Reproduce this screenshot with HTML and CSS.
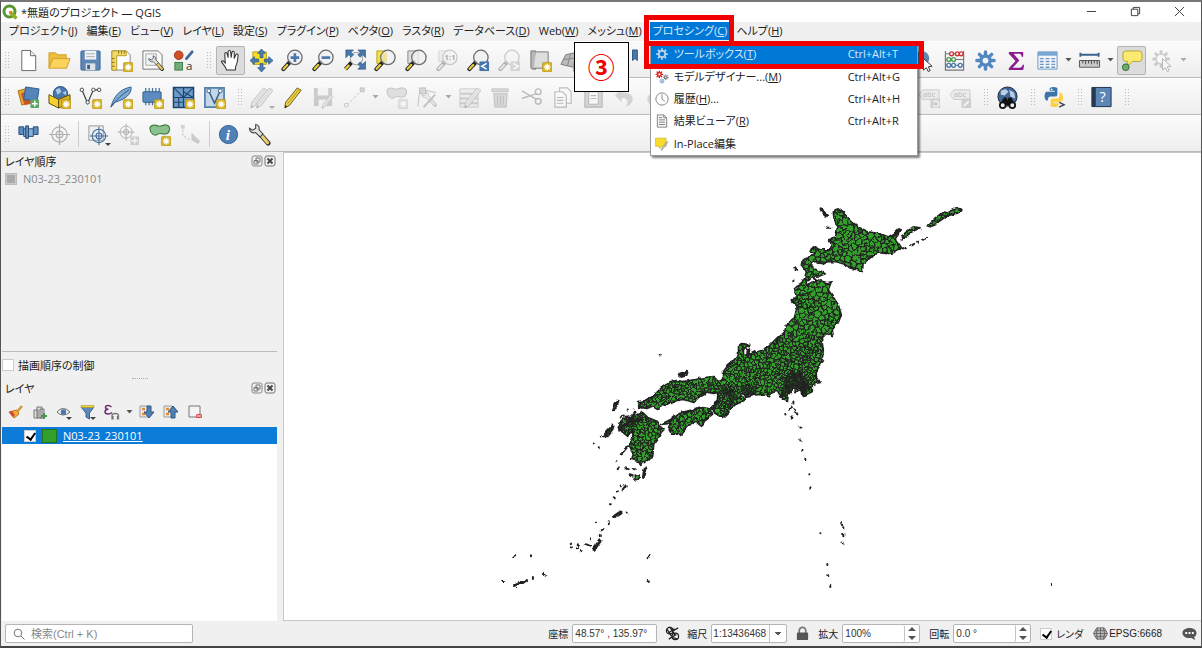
FILE: index.html
```html
<!DOCTYPE html>
<html lang="ja">
<head>
    <meta charset="UTF-8">
    <meta name="viewport" content="width=device-width, initial-scale=1.0">
    <title>無題のプロジェクト — QGIS</title>
    <link rel="stylesheet" href="styles.css">
</head>
<body>

<!-- shared icon parts -->
<svg class="defs" width="0" height="0">
    <symbol id="star" viewBox="0 0 24 24">
        <rect x="14" y="14" width="10" height="10" rx="1.5" fill="#d8b526" stroke="#a88a16" stroke-width=".6"/>
        <path d="M19 15.500V22.500M15.500 19H22.500M16.600 16.600l4.800 4.800M21.400 16.600l-4.800 4.800" stroke="#fff" stroke-width="1.300"/>
    </symbol>
    <symbol id="lens" viewBox="0 0 24 24">
        <path d="M9 14L2.500 21" stroke="#222" stroke-width="4.200" stroke-linecap="round"/>
        <path d="M6.500 16.700L2.800 20.700" stroke="#e6cc3c" stroke-width="2.400" stroke-linecap="round"/>
        <circle cx="14.500" cy="8.800" r="7.500" fill="#eef0f2" fill-opacity=".8" stroke="#6a6a6a" stroke-width="1.300"/>
    </symbol>
    <symbol id="gear" viewBox="0 0 24 24">
        <g stroke="currentColor" stroke-width="3.600" stroke-linecap="round">
            <path d="M12 3V21M3 12H21M5.600 5.600L18.400 18.400M18.400 5.600L5.600 18.400"/>
        </g>
        <circle cx="12" cy="12" r="6.500" fill="currentColor"/>
        <circle cx="12" cy="12" r="3" fill="#f2f2f2"/>
    </symbol>
    <symbol id="pencil" viewBox="0 0 24 24">
        <path d="M17 2l4 2.500L9 20l-5 3 .8-6z" fill="#e9cf45" stroke="#6b5c1c" stroke-width="1"/>
        <path d="M19 3.200L7 18.500" stroke="#b89a20" stroke-width="1"/>
        <path d="M4 23l.6-3 2 1.400z" fill="#222"/>
    </symbol>
    <symbol id="wrench" viewBox="0 0 24 24">
        <path d="M14 13l7 8" stroke="#333" stroke-width="5" stroke-linecap="round"/>
        <path d="M14.500 13.500l6 7" stroke="#ead06a" stroke-width="3.200" stroke-linecap="round"/>
        <path d="M1.500 5.500l3.500 2 3-2V1.500c3 .5 4 3 3.500 5.500l4 4.500-3 3-4.500-4.500C4.500 11 1.500 9 1.500 5.500z" fill="#e3e3e3" stroke="#444" stroke-width="1.100"/>
    </symbol>
    <symbol id="blob" viewBox="0 0 24 24">
        <path d="M2 6c0-4 5-4.500 8-3s5-1 8-1 5 2 4.500 5-2 5-6 4.500-4-1.500-7 .5-7-1-7.500-6z" fill="#8cc08e" stroke="#3f7f45" stroke-width="1.200"/>
    </symbol>
    <symbol id="label" viewBox="0 0 24 24">
        <path d="M1 9l4-5h17v10H5z" fill="#e2d8b0" stroke="#777"/>
    </symbol>
    <symbol id="cursor" viewBox="0 0 24 24">
        <path d="M12 10l9 8-4 .5 2 4-2 1-2-4-3 2.500z" fill="#fff" stroke="#333"/>
    </symbol>
    <symbol id="float" viewBox="0 0 12 12">
        <rect x="1" y="1" width="10" height="10" rx="2" fill="none" stroke="#888"/>
        <path d="M5 3h4v4H5zM3 5.500h4V9H3z" fill="#eee" stroke="#777"/>
    </symbol>
    <symbol id="close" viewBox="0 0 12 12">
        <rect x="1" y="1" width="10" height="10" rx="2" fill="none" stroke="#777"/>
        <path d="M3.500 3.500l5 5M8.500 3.500l-5 5" stroke="#444" stroke-width="1.800"/>
    </symbol>
    <symbol id="target" viewBox="0 0 24 24">
        <g fill="none" stroke="currentColor" stroke-width="1.300"><circle cx="12" cy="12" r="8"/><circle cx="12" cy="12" r="3.500"/><path d="M12 1v22M1 12h22"/></g>
    </symbol>
</svg>

<div class="window">
    <header class="titlebar">
        <svg class="logo" viewBox="0 0 16 16">
            <circle cx="7.500" cy="7.500" r="5.500" fill="none" stroke="#589632" stroke-width="3"/>
            <path d="M8 8l6.500 6.500" stroke="#93b023" stroke-width="3.400"/>
            <path d="M7 7l3.500.5-3 3z" fill="#ee7913"/>
        </svg>
        <h1>*無題のプロジェクト — QGIS</h1>
        <div class="window-controls">
            <button aria-label="最小化"><svg viewBox="0 0 12 12"><path d="M1 6h10"/></svg></button>
            <button aria-label="元に戻す"><svg viewBox="0 0 12 12"><path d="M1.500 3.500h7v7h-7zM3.500 3.500v-2h7v7h-2"/></svg></button>
            <button aria-label="閉じる"><svg viewBox="0 0 12 12"><path d="M1 1l10 10M11 1L1 11"/></svg></button>
        </div>
    </header>

    <nav class="menubar">
        <button>プロジェクト(<u>J</u>)</button>
        <button>編集(<u>E</u>)</button>
        <button>ビュー(<u>V</u>)</button>
        <button>レイヤ(<u>L</u>)</button>
        <button>設定(<u>S</u>)</button>
        <button>プラグイン(<u>P</u>)</button>
        <button>ベクタ(<u>O</u>)</button>
        <button>ラスタ(<u>R</u>)</button>
        <button>データベース(<u>D</u>)</button>
        <button>Web(<u>W</u>)</button>
        <button>メッシュ(<u>M</u>)</button>
        <div class="menu-open">
            <button class="active">プロセシング(<u>C</u>)</button>
            <div class="menu">
                <button class="menu-row selected">
                    <svg viewBox="0 0 24 24" color="#b8d4ee"><g stroke="currentColor" stroke-width="3"><path d="M12 2V22M2 12H22M5 5L19 19M19 5L5 19"/></g><circle cx="12" cy="12" r="5.500" fill="#0078d7" stroke="currentColor" stroke-width="3"/></svg>
                    <span>ツールボックス(<u>T</u>)</span><kbd>Ctrl+Alt+T</kbd>
                </button>
                <button class="menu-row">
                    <svg viewBox="0 0 24 24"><use href="#gear" width="15" height="15" color="#d22"/><use href="#gear" x="13" y="7" width="11" height="11" color="#777"/><use href="#gear" x="7" y="14" width="10" height="10" color="#79a3cf"/></svg>
                    <span>モデルデザイナー...(<u>M</u>)</span><kbd>Ctrl+Alt+G</kbd>
                </button>
                <button class="menu-row">
                    <svg viewBox="0 0 24 24" fill="none" stroke="#777" stroke-width="1.500"><circle cx="12" cy="12" r="10.500"/><path d="M12 4v8l5 4"/></svg>
                    <span>履歴(<u>H</u>)...</span><kbd>Ctrl+Alt+H</kbd>
                </button>
                <button class="menu-row">
                    <svg viewBox="0 0 24 24" fill="#f6f6f6" stroke="#777" stroke-width="1.500"><path d="M4 1.500h11l5 5v16H4zM15 1.500v5h5M7 10h10M7 14h10M7 18h10M7 6h5"/></svg>
                    <span>結果ビューア(<u>R</u>)</span><kbd>Ctrl+Alt+R</kbd>
                </button>
                <button class="menu-row">
                    <svg viewBox="0 0 24 24"><path d="M1 2h18v14h-7l-4 4v-4H1z" fill="#f7dc2c" stroke="#c3a812"/><path d="M22 9l-8 11-3 3 1-4 8-11z" fill="#ddd" stroke="#777"/></svg>
                    <span>In-Place編集</span>
                </button>
            </div>
            <span class="frame frame-menu"></span>
            <span class="frame frame-row"></span>
            <span class="callout">③</span>
        </div>
        <button>ヘルプ(<u>H</u>)</button>
    </nav>

    <div class="toolbar">
        <i class="grip"></i>
        <button aria-label="新規"><svg viewBox="0 0 24 24"><path d="M5 1.500h9l5.500 5.500v15.500H5z" fill="#fff" stroke="#666"/><path d="M14 1.500V7h5.500" fill="#eee" stroke="#666"/></svg></button>
        <button aria-label="開く"><svg viewBox="0 0 24 24"><path d="M1 20V4h7l2 2h9v4" fill="#eebe3c" stroke="#cf9e2a"/><path d="M1 20l4-10h18l-3.500 10z" fill="#fcd35c" stroke="#cf9e2a"/></svg></button>
        <button aria-label="保存"><svg viewBox="0 0 24 24"><rect x="2" y="2" width="20" height="20" rx="1" fill="#5c86b4" stroke="#3d6594"/><path d="M6 2h12v9H6z" fill="#f0f3f6"/><path d="M7.500 5h9M7.500 8h9" stroke="#aaa"/><path d="M7 15h10v7H7z" fill="#dde2e8"/><path d="M8.500 16.500h3V21h-3z" fill="#3a5f8a"/></svg></button>
        <button aria-label="新規レイアウト"><svg viewBox="0 0 24 24"><path d="M2 2h15l4 4v16H2z" fill="#fff" stroke="#888"/><path d="M2 2h15v5H7v15H2z" fill="#f3d968" stroke="#b89b25"/><path d="M9 2v3M12 2v3M15 2v3M2 10h3M2 14h3M2 18h3" stroke="#8d7518"/><use href="#star"/></svg></button>
        <button aria-label="レイアウトマネージャ"><svg viewBox="0 0 24 24"><path d="M2 2h16l4 4v15H2z" fill="#fafafa" stroke="#777"/><path d="M5 5h11v12H5z" fill="#eef3f8" stroke="#aaa"/><g transform="translate(7 6) scale(.72)"><use href="#wrench" width="24" height="24"/></g></svg></button>
        <button aria-label="スタイルマネージャ"><svg viewBox="0 0 24 24"><circle cx="7" cy="6.500" r="4.500" fill="#cf5026" stroke="#9c3614"/><path d="M15 10l6-7" stroke="#44699a" stroke-width="3" stroke-linecap="round"/><rect x="3" y="14" width="8" height="8" fill="#70ab7a" stroke="#417b4c"/><text x="14.500" y="22" font-size="12" fill="#333">a</text></svg></button>
        <i class="grip"></i>
        <button class="checked" aria-label="地図移動"><svg viewBox="0 0 24 24"><path d="M8 22c-1-4-4-6-5.500-9 1-1.500 2.500-.5 4 1.500L6 5c.3-1.800 2.200-1.800 2.500 0L9.500 9V3c.3-2 2.500-2 2.700 0l.5 6 .8-5.500c.5-1.700 2.500-1.400 2.500.5L15.800 10l1.700-4c.8-1.500 2.600-.8 2.400.8-.5 4-.5 8-2.400 11l-.5 4.200z" fill="#fff" stroke="#333" stroke-width="1.100"/></svg></button>
        <button aria-label="選択部分へパン"><svg viewBox="0 0 24 24"><path d="M3 3h14v13H3z" fill="#f8df20" stroke="#b5a01c"/><path d="M12 0l4 4.500h-2.500V9h-3V4.500H8zM12 24l-4-4.500h2.500V15h3v4.500H16zM0 12l4.500-4v2.500H9v3H4.500V16zM24 12l-4.500 4v-2.500H15v-3h4.500V8z" fill="#4c7cb0" stroke="#2f5a8b" stroke-width=".8"/></svg></button>
        <button aria-label="拡大"><svg viewBox="0 0 24 24"><use href="#lens"/><path d="M14.500 4.500v9M10 9h9" stroke="#4a78ac" stroke-width="2.800"/></svg></button>
        <button aria-label="縮小"><svg viewBox="0 0 24 24"><use href="#lens"/><path d="M10 9h9" stroke="#4a78ac" stroke-width="2.800"/></svg></button>
        <button aria-label="全域表示"><svg viewBox="0 0 24 24"><path d="M9 14L2.500 21" stroke="#222" stroke-width="4"/><path d="M6.500 16.700l-4 4.300" stroke="#e6cc3c" stroke-width="2.400"/><circle cx="14" cy="10" r="6.500" fill="#eef0f2" stroke="#999"/><g fill="#4878ac" stroke="#2d5788" stroke-width=".7"><path d="M3 1h8L8.500 3.500l2.500 2.500-2.500 2.500L6 6 3 9zM23.500 1h-8L18 3.500 15.500 6 18 8.500 20.500 6l3 3zM23.500 21h-8l2.500-2.500-2.500-2.500 2.500-2.500 2.500 2.500 3-3z"/></g></svg></button>
        <button aria-label="選択範囲にズーム"><svg viewBox="0 0 24 24"><path d="M3 2h10v13H3z" fill="#f5df42" stroke="#b9a324"/><use href="#lens"/><path d="M9 5h4v8H9z" fill="#f1e28a"/></svg></button>
        <button aria-label="レイヤにズーム"><svg viewBox="0 0 24 24"><path d="M3 2h11v13H3z" fill="#ddd" stroke="#888"/><use href="#lens"/></svg></button>
        <button aria-label="等倍" disabled><svg viewBox="0 0 24 24"><path d="M3 2h11v11H3z" fill="#ddd" stroke="#888"/><use href="#lens"/><text x="9" y="12" font-size="8" font-weight="700">1:1</text></svg></button>
        <button aria-label="前の表示"><svg viewBox="0 0 24 24"><use href="#lens"/><rect x="13" y="13" width="10" height="10" fill="#4474aa"/><path d="M20.500 15l-5 3 5 3" fill="none" stroke="#fff" stroke-width="1.700"/></svg></button>
        <button aria-label="次の表示" disabled><svg viewBox="0 0 24 24"><use href="#lens"/><rect x="13" y="13" width="10" height="10" fill="#999"/><path d="M16 15l5 3-5 3" fill="none" stroke="#fff" stroke-width="1.700"/></svg></button>
        <button aria-label="新規地図ビュー"><svg viewBox="0 0 24 24"><path d="M2 2h5v19H4a2 2 0 0 1-2-2z" fill="#b8b8b8" stroke="#777"/><path d="M7 3h13v17H5" fill="#dedede" stroke="#777"/><use href="#star"/></svg></button>
        <button aria-label="新規3Dビュー"><svg viewBox="0 0 24 24"><path d="M1 16L6 6l9-2h7v12l-8 3z" fill="#bbb" stroke="#777"/><path d="M4 11l16-2M11 5l-3 12" stroke="#888"/><use href="#star"/></svg></button>
        <button aria-label="ブックマーク作成"><svg viewBox="0 0 24 24"><path d="M8 2h6v9l-3-2-3 2z" fill="#5c86b4"/></svg></button>
        <button aria-label="ブックマーク"><svg viewBox="0 0 24 24"><path d="M11 1h5v11l-2.500-2L11 12z" fill="#4a78ac" stroke="#2d5788"/></svg></button>
        <i class="toolbar-space"></i>
        <button aria-label="地物情報"><svg viewBox="0 0 24 24"><circle cx="10" cy="10" r="8" fill="#5c86b4"/><use href="#cursor"/></svg></button>
        <button aria-label="計算機"><svg viewBox="0 0 24 24"><path d="M2.500 2v20M21.500 2v20M2 22h20M3 5h18M3 11h18M3 17h18" stroke="#777" stroke-width="1.200"/><g fill="#fff" stroke-width="1.500"><g stroke="#c33"><circle cx="9" cy="5" r="2"/><circle cx="15" cy="5" r="2"/><circle cx="19" cy="5" r="2"/></g><g stroke="#4b9c4e"><circle cx="6" cy="11" r="2"/><circle cx="11" cy="11" r="2"/></g><g stroke="#4a78ac"><circle cx="6" cy="17" r="2"/><circle cx="11" cy="17" r="2"/><circle cx="18" cy="17" r="2"/></g></g></svg></button>
        <button aria-label="ツールボックス"><svg viewBox="0 0 24 24" color="#5387c0"><use href="#gear"/></svg></button>
        <button aria-label="統計"><svg viewBox="0 0 24 24"><path d="M4 3h15v5h-1.500C17 5.500 16 5 14 5H9l6 7-7 7.500h7c2 0 3-1 3.500-3H20L19 22H4v-2l7-7.500L4 5z" fill="#8b1a8b"/></svg></button>
        <button aria-label="属性テーブル"><svg viewBox="0 0 24 24"><path d="M2 3h20v18H2z" fill="#f3f6fa" stroke="#6d96c4"/><path d="M2 3h20v4H2z" fill="#7ba7d7"/><path d="M4 10h4M10 10h4M16 10h4M4 13h4M10 13h4M16 13h4M4 16h4M10 16h4M16 16h4M4 19h4M10 19h4M16 19h4" stroke="#6d96c4" stroke-width="1.400"/></svg></button>
        <i class="arrow"></i>
        <button aria-label="計測"><svg viewBox="0 0 24 24"><path d="M2 6h20M2.500 4v4M21.500 4v4" stroke="#3c638f" stroke-width="2"/><path d="M1.500 12h21v7h-21z" fill="#ccc" stroke="#555"/><path d="M5 12v3M8 12v4M11 12v3M14 12v4M17 12v3M20 12v4" stroke="#444"/></svg></button>
        <i class="arrow"></i>
        <button class="checked" aria-label="マップチップ"><svg viewBox="0 0 24 24"><path d="M6 2h14q3 0 3 3v5q0 3-3 3h-7l-5 5v-5H6q-3 0-3-3V5q0-3 3-3z" fill="#faea70" stroke="#b7a52b"/><circle cx="6" cy="19" r="3.500" fill="#69ab70" stroke="#35683c"/></svg></button>
        <button aria-label="アクション" disabled><svg viewBox="0 0 24 24" color="#777"><use href="#gear" width="21" height="21"/><circle cx="10.500" cy="10.500" r="5" fill="#fff" stroke="#666"/><use href="#cursor"/></svg></button>
        <i class="arrow faded"></i>
    </div>

    <div class="toolbar">
        <i class="grip"></i>
        <button aria-label="データソースマネージャ"><svg viewBox="0 0 24 24"><path d="M1 5l11-3 3 14-10 4z" fill="#e7a72c" stroke="#aa7511"/><path d="M4 8l9-4 4 14-9 2z" fill="#cc542d"/><path d="M9 1l14 2-2 13-14-2z" fill="#5484b8" stroke="#305c90"/><rect x="14" y="14" width="9" height="9" rx="1" fill="#5ea464"/><path d="M18.500 15.500v6M15.500 18.500h6" stroke="#fff" stroke-width="1.500"/></svg></button>
        <button aria-label="GeoPackage"><svg viewBox="0 0 24 24"><circle cx="13" cy="8" r="7.500" fill="#4777ad" stroke="#2c517e"/><path d="M8 4l4-2 2 4-4 3zM15 7l4-2v5z" fill="#aecae6"/><path d="M1 9l10 5v9L1 18z" fill="#f5cf2a" stroke="#5d4c08"/><path d="M11 14l12-5v9l-12 5z" fill="#e0b51b" stroke="#5d4c08"/><use href="#star"/></svg></button>
        <button aria-label="新規シェープファイル"><svg viewBox="0 0 24 24"><path d="M3 4l6 14 6-14h6" fill="none" stroke="#444" stroke-width="1.300"/><g fill="#fff" stroke="#444"><circle cx="3" cy="4" r="1.800"/><circle cx="15" cy="4" r="1.800"/><circle cx="21" cy="4" r="1.800"/><circle cx="9" cy="17" r="1.800"/></g><use href="#star"/></svg></button>
        <button aria-label="新規SpatiaLite"><svg viewBox="0 0 24 24"><path d="M1 22C4 10 11 3 22 1c1 7-6 13-17 16z" fill="#7da9d3" stroke="#315d8b"/><path d="M1 22C7 14 13 8 20 4" fill="none" stroke="#315d8b"/><use href="#star"/></svg></button>
        <button aria-label="一時レイヤ"><svg viewBox="0 0 24 24"><path d="M5 2v18M8.500 2v18M12 2v18M15.500 2v18M19 2v18" stroke="#44709f" stroke-width="1.300"/><rect x="2" y="6" width="19" height="11" rx="1" fill="#5c8cbf" stroke="#315d8b"/><use href="#star"/></svg></button>
        <button aria-label="新規メッシュ"><svg viewBox="0 0 24 24"><path d="M1.500 1.500h21v21h-21z" fill="#6d9bcb" stroke="#1e446d" stroke-width="1.500"/><path d="M1.500 12h21M12 1.500v21M1.500 1.500L12 12 22.500 1.500M12 6l10 6M2 17h10M7 12v10" stroke="#1e446d" stroke-width="1.200" fill="none"/><use href="#star"/></svg></button>
        <button aria-label="仮想レイヤ"><svg viewBox="0 0 24 24"><path d="M2 2h20v20H2z" fill="#c3d6ea" stroke="#5580ad" stroke-width="1.800"/><path d="M6 5l6 13 6-13" fill="none" stroke="#2f5a86" stroke-width="1.500"/><circle cx="6" cy="5" r="2" fill="#fff" stroke="#2f5a86"/><circle cx="18" cy="5" r="2" fill="#fff" stroke="#2f5a86"/><use href="#star"/></svg></button>
        <i class="grip"></i>
        <button class="has-arrow faded" aria-label="現在の編集" disabled><svg viewBox="0 0 24 24"><g transform="translate(-3 0)"><use href="#pencil" width="24" height="24"/></g><use href="#pencil" x="3" width="24" height="24"/></svg></button>
        <button aria-label="編集モード"><svg viewBox="0 0 24 24"><use href="#pencil"/></svg></button>
        <button aria-label="編集を保存" disabled><svg viewBox="0 0 24 24"><rect x="2" y="2" width="19" height="19" fill="#777"/><path d="M6 2h11v8H6zM7 14h8v7H7z" fill="#eee"/><use href="#pencil" x="8" y="8" width="16" height="16"/></svg></button>
        <button aria-label="線を追加" disabled><svg viewBox="0 0 24 24"><path d="M4 20L20 4" stroke="#555" stroke-dasharray="3 2"/><circle cx="3.500" cy="20" r="2" fill="#fff" stroke="#555"/><rect x="18" y="2" width="4" height="4" fill="#999" stroke="#555"/></svg></button>
        <i class="arrow faded"></i>
        <button aria-label="ポリゴン追加" disabled><svg viewBox="0 0 24 24"><use href="#blob"/><use href="#star"/></svg></button>
        <button aria-label="頂点ツール" disabled><svg viewBox="0 0 24 24"><path d="M4 3L2 21M4 3l17 4" stroke="#555"/><rect x="4" y="2" width="6" height="6" fill="#999" stroke="#555"/><g transform="translate(5 5) scale(.7)"><use href="#wrench" width="24" height="24"/></g><path d="M8 22L20 9" stroke="#555" stroke-width="2"/></svg></button>
        <i class="arrow faded"></i>
        <button aria-label="属性変更" disabled><svg viewBox="0 0 24 24"><path d="M2 3h19v19H2z" fill="#e6dfa9" stroke="#777"/><path d="M2 8h19M2 13h19M2 18h19" stroke="#777" stroke-width="2"/><use href="#pencil" x="3"/></svg></button>
        <button aria-label="削除" disabled><svg viewBox="0 0 24 24"><path d="M3 3h17v3H3zM5 8h14l-1 14H6z" fill="#d39292" stroke="#844"/><path d="M9 10v10M12 10v10M15 10v10" stroke="#844"/></svg></button>
        <button aria-label="切り取り" disabled><svg viewBox="0 0 24 24" fill="none" stroke="#444" stroke-width="1.500"><path d="M2 5l15 9M2 13l15-5"/><circle cx="19" cy="6" r="3"/><circle cx="19" cy="16" r="3"/></svg></button>
        <button aria-label="コピー" disabled><svg viewBox="0 0 24 24" fill="#fff" stroke="#444" stroke-width="1.200"><path d="M9 2h8l4 4v12H9z"/><path d="M4 6h8l4 4v12H4zM6 12h7M6 15h7M6 18h7"/></svg></button>
        <button aria-label="貼り付け" disabled><svg viewBox="0 0 24 24" fill="#fff" stroke="#444" stroke-width="1.200"><path d="M3 3h18v19H3z" fill="#999"/><path d="M7 6h10v13H7zM9 10h6M9 13h6"/></svg></button>
        <button aria-label="元に戻す操作" disabled><svg viewBox="0 0 24 24"><path d="M2 10l7-7v4c9-1 13 4 11 9-1 3-4 5-7 6 4-6 2-10-4-9v4z" fill="#b78a6a"/></svg></button>
        <button aria-label="やり直し" disabled><svg viewBox="0 0 24 24"><path d="M22 10l-7-7v4C6 6 2 11 4 16c1 3 4 5 7 6-4-6-2-10 4-9v4z" fill="#999"/></svg></button>
        <i class="toolbar-space wide"></i>
        <button aria-label="ラベル回転" disabled><svg viewBox="0 0 24 24"><use href="#label"/><text x="5" y="12" font-size="8" fill="#333">abc</text><rect x="13" y="13" width="10" height="10" rx="1" fill="#888"/><path d="M16 17a3 3 0 1 1 0 3" fill="none" stroke="#fff" stroke-width="1.500"/></svg></button>
        <button aria-label="ラベル編集" disabled><svg viewBox="0 0 24 24"><use href="#label"/><text x="5" y="12" font-size="8" fill="#333">abc</text><rect x="13" y="13" width="10" height="10" rx="1" fill="#888"/><path d="M15.500 21l5-5" stroke="#fff" stroke-width="2"/></svg></button>
        <i class="grip"></i>
        <button aria-label="メタ検索"><svg viewBox="0 0 24 24"><circle cx="12" cy="11" r="10" fill="#3f6695" stroke="#1c2c40"/><path d="M5 5l5-2 3 3-4 4-4-1zM14 4l5 3 1 6-5-2zM7 12l4 2-1 4z" fill="#b9cfe4"/><path d="M8 12h3l1 3 1-3h3l4 8H4z" fill="#111"/><g fill="#eee" stroke="#111" stroke-width="1.800"><circle cx="7" cy="20" r="3"/><circle cx="17" cy="20" r="3"/></g></svg></button>
        <i class="grip"></i>
        <button aria-label="Python"><svg viewBox="0 0 24 24"><path d="M7 2q4-2 8 0v7q0 2-2 2H8q-3 0-3 4H3q-3-4 0-9h9V5H7z" fill="#3e75a8"/><path d="M17 7h2q4 5 0 10h-8v1h5v3q-4 2-8 0v-6q0-2 2-2h5q2 0 2-3z" fill="#fdd142"/><circle cx="9" cy="3.500" r=".9" fill="#fff"/><path d="M17 17l5 2.500-5 2.500" fill="none" stroke="#444" stroke-width="1.500"/></svg></button>
        <i class="grip"></i>
        <button aria-label="ヘルプ"><svg viewBox="0 0 24 24"><path d="M2 1.500h20v20H2z" fill="#5b86b6" stroke="#1e3048"/><path d="M2 1.500h4v20H2z" fill="#25384f"/><text x="10" y="17" font-size="15" fill="#fff">?</text></svg></button>
        <i class="grip"></i>
    </div>

    <div class="toolbar">
        <i class="grip"></i>
        <button aria-label="GPS"><svg viewBox="0 0 24 24"><path d="M2 4h5v8H2zM17 4h5v8h-5z" fill="#5c8cbf" stroke="#284d78"/><path d="M7 6h10v8H7z" fill="#89aed4" stroke="#284d78"/><path d="M9 3h3v13H9z" fill="#5c8cbf" stroke="#284d78"/></svg></button>
        <button aria-label="中央表示" disabled><svg viewBox="0 0 24 24"><use href="#target"/></svg></button>
        <i class="separator"></i>
        <button class="has-arrow" aria-label="デジタイズ"><svg viewBox="0 0 24 24" color="#416e9f"><path d="M3 3h15v15H3z" fill="#eee" stroke="#999"/><use href="#target" x="3" y="3" width="21" height="21"/></svg></button>
        <button aria-label="点を追加" disabled><svg viewBox="0 0 24 24"><use href="#target" width="19" height="19"/><rect x="14" y="14" width="9" height="9" fill="#888"/><path d="M18.500 15.500v6M15.500 18.500h6" stroke="#fff" stroke-width="1.500"/></svg></button>
        <button aria-label="地物を追加"><svg viewBox="0 0 24 24"><use href="#blob"/><use href="#star"/></svg></button>
        <button aria-label="軌跡" disabled><svg viewBox="0 0 24 24"><path d="M4 3v10l8 5" fill="none" stroke="#777" stroke-width="1.500" stroke-dasharray="2 2"/><rect x="2" y="2" width="4" height="4" fill="#888"/><path d="M13 10l9 9-2 3-7-4z" fill="#777"/></svg></button>
        <i class="separator"></i>
        <button aria-label="情報"><svg viewBox="0 0 24 24"><circle cx="12" cy="12" r="9.500" fill="#4f81b8" stroke="#315d8b"/><text x="9" y="18" font-size="16" class="serif" fill="#fff">i</text></svg></button>
        <button aria-label="設定"><svg viewBox="0 0 24 24"><use href="#wrench"/></svg></button>
    </div>

    <main class="workspace">
        <aside class="docks">
            <section>
                <div class="dock-title"><h2>レイヤ順序</h2>
                    <button aria-label="分離"><svg><use href="#float"/></svg></button>
                    <button aria-label="閉じる"><svg><use href="#close"/></svg></button>
                </div>
                <ul class="order-list"><li><i class="layer-icon"></i>N03-23_230101</li></ul>
                <label class="check-row"><input type="checkbox" class="check">描画順序の制御</label>
            </section>
            <div class="splitter"></div>
            <section class="layers">
                <div class="dock-title"><h2>レイヤ</h2>
                    <button aria-label="分離"><svg><use href="#float"/></svg></button>
                    <button aria-label="閉じる"><svg><use href="#close"/></svg></button>
                </div>
                <div class="layer-tools">
                    <button aria-label="スタイル"><svg viewBox="0 0 16 16"><path d="M1 8l8-2 2 4-5 4z" fill="#f0b43a" stroke="#c46a20"/><path d="M1 8l4 5 2-2-3-4z" fill="#d6472b"/><path d="M9 8l5-6" stroke="#cf9a3b" stroke-width="2.500"/></svg></button>
                    <button aria-label="グループ追加"><svg viewBox="0 0 16 16"><path d="M2 6h4v8H2zM5 3h5v11H5zM8 5h4v9H8z" fill="#ddd" stroke="#777"/><path d="M12 9v6M9 12h6" stroke="#45954b" stroke-width="2"/></svg></button>
                    <button class="has-arrow" aria-label="表示テーマ"><svg viewBox="0 0 16 16"><path d="M1 8q6-7 13 0-7 6-13 0z" fill="#fff" stroke="#666"/><circle cx="7.500" cy="8" r="2.800" fill="#4a78ac"/></svg></button>
                    <button class="has-arrow" aria-label="フィルタ"><svg viewBox="0 0 16 16"><path d="M1 3h13L9.500 9v6L6 13V9z" fill="#5c8cbf" stroke="#3a628e"/><path d="M1 1.500h13v2H1z" fill="#f0d83e" stroke="#a99723" stroke-width=".6"/></svg></button>
                    <button aria-label="式フィルタ"><svg viewBox="0 0 16 16"><path d="M7.500 3Q6 1.500 4 1.500q-2.500 0-2.500 2 0 1.700 3 1.700-3.500 0-3.500 2.300Q1 10 4 10q2.500 0 4-1.500" fill="none" stroke="#6d2f70" stroke-width="1.500"/><path d="M8 15.500v-4q0-2 3.200-2t3.300 2v4M9 12v3.500M13.500 12v3.500" fill="none" stroke="#777" stroke-width="1.300"/></svg></button>
                    <i class="arrow"></i>
                    <button aria-label="全て展開"><svg viewBox="0 0 16 16"><path d="M1 2h8v11H1z" fill="#eee" stroke="#999"/><path d="M3 5h3M3 10h3" stroke="#e58b2f" stroke-width="2.500"/><path d="M8 2h4v6h3l-5 6-5-6h3z" fill="#4f7fb4" stroke="#2e5787"/></svg></button>
                    <button aria-label="全て折りたたむ"><svg viewBox="0 0 16 16"><path d="M1 2h8v11H1z" fill="#eee" stroke="#999"/><path d="M3 5h3M3 10h3" stroke="#e58b2f" stroke-width="2.500"/><path d="M8 14h4V8h3l-5-6-5 6h3z" fill="#4f7fb4" stroke="#2e5787"/></svg></button>
                    <button aria-label="レイヤ削除"><svg viewBox="0 0 16 16"><path d="M2 2h11v11H2z" fill="#f4f4f4" stroke="#777"/><rect x="9" y="10" width="6" height="4" rx="1.500" fill="#dc4646"/><path d="M10 12h4" stroke="#fff"/></svg></button>
                </div>
                <div class="tree">
                    <label class="tree-row"><input type="checkbox" class="check" checked><i class="swatch"></i><span>N03-23_230101</span></label>
                </div>
            </section>
        </aside>

        <div class="canvas">
            <svg id="map" viewBox="284 153 916 468">
                <defs>
                    <clipPath id="land-clip"><use href="#land"/></clipPath>
                    <filter id="coast" filterUnits="userSpaceOnUse" x="480" y="190" width="600" height="420">
                        <feTurbulence type="fractalNoise" baseFrequency=".2" numOctaves="2" seed="4"/>
                        <feDisplacementMap in="SourceGraphic" scale="4" xChannelSelector="R" yChannelSelector="G"/>
                    </filter>
                </defs>
                <g filter="url(#coast)">
                <path id="land" class="land" d="
                    M833 212l2-2 3-1 4 3 5 5 5 5 6 5 10 5 6 1 6 1 8 3 7-4 4-3-1 5-3 4 3 4 4 6-4 1-5 3-6 1-7-1-5 2-5 3-7 6-1 8-5-2-5-1-9-5-8-2h-8l-5 3-5-3h-4l-3 3 2 4 5 1 8 4-5 2-7 1-5 4-4-2 2-7-5-7 1-5 6-2 7-5-5-2 2-4 8 3h10l2-5-4-5 7-2 2-10-3-8z
                    M901 240l4-7 8-6 7 1-8 4-7 5z
                    M927 226l6-6 10-8 4 1 11-5 4 2-4 3-11 3-10 7-7 4z
                    M820 281l7 2 4-1-3 8 4 6 6 9 3 10-3 8-6 7 1 7-8-3-4 4 2 12-1 10-6 10v7l4 6-8 2v7l-10 5-2-7 3-3-6 3-4-1-5 6-1 7-5-2 1-6-2 3-4-5-5 1-4 4-8-2-8 1-7 2-3-5-2 4 5 3-5 3-5 2-7 7-6 6-4-2-5-3-1-6 5-7v-7l-4 1-5-1-6 3-4 2-5 5-6-2-5-1-5 1-5 1-7 4-3-1-5 5-5-3-6 2-8-1v-6l6-1 8-4 8-8 10-7 6-1 6 1 13-2 9-2 9-1 5 5 5-2v-8l5-7 5-4 5-6v-9l4-2 6 1-5 5v6l8-2 10-3 7-4 6-6 10-8 2-8 8-7 3-12-6-6 5-2-2-10 6-3 3-6 3 1v5l7-2 4-2-5-3z
                    M773 342l5-5-1 6-3 3z
                    M660 425l10-5 8-6 7-1 5-1 7-4 5-1 6 1 4 7-7 5-4 7-6-5-8 5-7 8h-8l-4-6 2-5z
                    M625 418l8-1 9-4 5 5 10 4 1 4 5 4-5 8-5 7-1 13-7 4-5 4-3-4-7-2 2-7-4-8 4-8v-7l-5 7-5-4-5-5 3-5z
                    M602 437l4-5 4-4 3 2-6 7z
                    M612 410l3-8 3-1-3 8z
                    M679 376l4-2 4-2-1 4-5 2z
                    M710 408l4-2 4-4-3 6-4 2z"/>
                <g id="cells" clip-path="url(#land-clip)"></g>
                <path class="islets thick" d="M821 209l2 4 3 3M899 230l-7 7M679 375l7-3M614 405l2-3M605 435l7-8M645 469l-2 8M620 513l-6 4M599 542l-3 4-3 4M634 412l-4 8-5 6-6 3M640 420l-8 2M748 350l-1 8"/>
                <path class="islets" d="M827 228h3M902 249l4-2M911 246l3-2M917 243l1-1M922 240l5-2M794 268l2 2M793 280v1M795 297v1M796 321v1M790 334l1 1M659 355v1M600 437l5-2M598 448v1M592 444h1M627 447l-4 5M616 462v1M617 469v1M625 469l2 1M632 470h3M620 455l3-3M629 475l3 1M619 486l1 1M625 486l-3 4M617 492l1 1M613 498l1 1M609 505h1M626 513l1 1M608 522v3M601 531l2-1M599 536v1M595 522v1M590 538v3M585 545l5 2M579 551h3M576 549h1M570 548h1M577 545v1M570 544v1M530 556v1M512 559l1-1M514 556h1M502 582h2M514 586l4-2h4l4-3M516 588v1M532 578v2M541 575l5 2M542 573v3M649 556l-1 2M648 582v1M623 416l-3 2M690 411l-8 2M800 391l-5 2M793 402v2M791 407l-2 3M794 410l1 1M796 413l1 2M785 414v1M791 418h1M799 428h2M800 440v1M802 451v1M805 459v1M809 475v1M810 488v1M820 533v1M841 524l1 2M843 528v1M843 534v3M842 543l1 2M827 565v1M827 576l1 1M830 586v1M1052 585v1M749 345v1M755 352l-5 3M647 400v1M626 410v1"/>
                <circle class="land" cx="636" cy="478" r="2.500"/>
                </g>
            </svg>
        </div>
    </main>

    <footer class="statusbar">
        <div class="search"><svg viewBox="0 0 12 12"><circle cx="5" cy="5" r="3.800"/><path d="M8 8l3.500 3.500"/></svg><input type="text" placeholder="検索(Ctrl + K)" aria-label="検索"></div>
        <label for="coord">座標</label>
        <input id="coord" class="coord" type="text" value="48.57° , 135.97°">
        <button class="extent" aria-label="範囲"><svg viewBox="0 0 16 16" fill="none" stroke="#222" stroke-width="1.300"><path d="M2 3l5 8M5 1l6 9M3 8l7-5M9 5l5-3"/><circle cx="5" cy="5" r="3.500"/><circle cx="11" cy="11" r="3.500"/><path d="M4 14l8-5M8 12l5 2"/></svg></button>
        <label for="scale">縮尺</label>
        <select id="scale"><option>1:13436468</option></select>
        <button class="lock" aria-label="縮尺固定"><svg viewBox="0 0 16 16"><path d="M4.500 8V5a3.500 3.500 0 0 1 7 0v3" fill="none" stroke="#777" stroke-width="1.800"/><rect x="2" y="7" width="12" height="8" rx="1" fill="#555"/></svg></button>
        <label for="magnifier">拡大</label>
        <div class="spin"><input id="magnifier" type="text" value="100%"><button aria-label="上げる"></button><button class="down" aria-label="下げる"></button></div>
        <label for="rotation">回転</label>
        <div class="spin"><input id="rotation" type="text" value="0.0 °"><button aria-label="上げる"></button><button class="down" aria-label="下げる"></button></div>
        <label class="render"><input type="checkbox" class="check" checked>レンダ</label>
        <button class="crs"><svg viewBox="0 0 16 16" fill="none" stroke="#666"><path d="M4 2h8l3.500 6L12 14H4L.5 8z" fill="#bbb"/><path d="M1 8h14M8 2v12M5 2q-3 6 0 12M11 2q3 6 0 12M2 5h12M2 11h12"/></svg>EPSG:6668</button>
        <button class="messages" aria-label="メッセージ"><svg viewBox="0 0 16 16"><path d="M8 2c5 0 7.500 2.500 7.500 5.500 0 2-1 3.500-2.500 4.300l1 3.200-4-2.300c-6 .8-9.500-1.700-9.500-5.200C.5 4.500 3 2 8 2z" fill="#555"/><path d="M3.500 7.500h2M7 7.500h2M10.500 7.500h2" stroke="#fff" stroke-width="2"/></svg></button>
    </footer>
</div>

<script src="map.js"></script>
</body>
</html>
```

FILE: styles.css
```css
* {
    box-sizing: border-box;
}
body {
    margin: 0;
    font-family: "Open Sans", "Noto Sans CJK JP", sans-serif;
    font-size: 11px;
    font-feature-settings: "palt";
    color: #222;
}
button {
    font: inherit;
    font-feature-settings: inherit;
    color: inherit;
    background: none;
    border: 0;
    padding: 0;
    white-space: nowrap;
}
u {
    text-underline-offset: 1px;
}
.defs {
    position: absolute;
}
.window {
    display: flex;
    flex-direction: column;
    height: 100vh;
    background: #f0f0f0;
    border: 1px solid #555;
    border-top: 2px solid #777;
    border-bottom: 2px solid #444;
}

/* title + menu */
.titlebar {
    display: flex;
    align-items: center;
    height: 20px;
    background: #fff;
}
.logo {
    width: 16px;
    height: 16px;
    margin: 0 3px 0 1px;
}
h1 {
    flex: 1;
    margin: 0;
    font-size: 11px;
    font-weight: 400;
}
.window-controls {
    display: flex;
}
.window-controls button {
    width: 44px;
    height: 20px;
}
.window-controls svg {
    width: 11px;
    height: 11px;
    fill: none;
    stroke: #333;
}
.menubar {
    display: flex;
    height: 19px;
    padding-left: 3px;
    line-height: 18px;
}
.menubar > button,
.active {
    margin: 0 1px 0 2px;
    padding: 0 3px;
    height: 18px;
}
.menu-open {
    position: relative;
    z-index: 5;
    margin-left: 2px;
}
.active {
    background: #0078d7;
    color: #d8eaf9;
}
.menu {
    position: absolute;
    left: 2px;
    top: 20px;
    width: 268px;
    height: 114px;
    display: flex;
    flex-direction: column;
    background: #fff;
    border: 1px solid #999;
    box-shadow: 2px 2px 2px rgba(0, 0, 0, .5);
}
.menu-row {
    flex: 1;
    display: flex;
    align-items: center;
    padding: 0 4px;
    text-align: left;
}
.menu-row svg {
    width: 14px;
    height: 14px;
    margin-right: 5px;
}
.menu-row span {
    flex: 1;
}
.menu-row kbd {
    font: inherit;
    width: 65px;
}
.selected {
    background: #0078d7;
    color: #d8eaf9;
}
.frame {
    position: absolute;
    left: -4px;
    border: 5px solid #f00000;
    pointer-events: none;
}
.frame-menu {
    top: -7px;
    right: -3px;
    height: 31px;
}
.frame-row {
    top: 19px;
    width: 280px;
    height: 28px;
}
.callout {
    position: absolute;
    left: -74px;
    top: 20px;
    width: 55px;
    height: 50px;
    background: #fff;
    border: 1px solid #000;
    color: #f00000;
    font-size: 27px;
    font-weight: 700;
    line-height: 50px;
    text-align: center;
}

/* toolbars */
.toolbar {
    display: flex;
    align-items: center;
    gap: 2px;
    height: 37px;
    padding-top: 1px;
    background: linear-gradient(#fbfbfb, #eee);
    border-top: 1px solid #fff;
    border-bottom: 1px solid #bbb;
    overflow: hidden;
}
.toolbar button {
    position: relative;
    display: flex;
    align-items: center;
    justify-content: center;
    flex: none;
    width: 29px;
    height: 29px;
}
.toolbar svg {
    width: 23px;
    height: 23px;
}
.toolbar button:disabled svg {
    filter: grayscale(1);
    opacity: .32;
}
.toolbar .checked {
    background: #dcdcdc;
    border: 1px solid #b4b4b4;
    border-radius: 2px;
}
.serif {
    font-family: "Liberation Serif", serif;
    font-style: italic;
    font-weight: 700;
}
.grip {
    flex: none;
    width: 11px;
    height: 18px;
    background: radial-gradient(circle, #bbb 1px, transparent 1px) 3px 0 / 3px 3px;
    background-clip: content-box;
    padding: 0 3px;
    margin-left: 3px;
}
.grip:first-child {
    margin-left: 0;
}
.separator {
    flex: none;
    width: 1px;
    height: 26px;
    margin: 0 2px;
    background: #ccc;
}
.toolbar-space {
    flex: none;
    width: 257px;
}
.toolbar-space.wide {
    width: 241px;
}
.arrow {
    flex: none;
    width: 9px;
    height: 5px;
    background: #555;
    clip-path: polygon(1px 0, 8px 0, 50% 4px);
}
.arrow.faded {
    background: #aaa;
}
.has-arrow {
    position: relative;
}
.has-arrow::after {
    content: "";
    position: absolute;
    right: 1px;
    bottom: 3px;
    border: 3px solid transparent;
    border-top-color: #444;
    border-bottom: 0;
}
.has-arrow.faded::after {
    border-top-color: #aaa;
}

/* docks */
.workspace {
    flex: 1;
    min-height: 0;
    display: flex;
    gap: 6px;
}
.docks {
    flex: 0 0 276px;
    display: flex;
    flex-direction: column;
    padding-left: 1px;
}
.dock-title {
    display: flex;
    align-items: center;
    height: 18px;
    padding-left: 3px;
}
.dock-title h2 {
    flex: 1;
    margin: 0;
    font-size: 11px;
    font-weight: 400;
}
.dock-title button {
    display: flex;
    width: 13px;
}
.dock-title svg {
    width: 12px;
    height: 12px;
}
.order-list {
    height: 182px;
    margin: 0;
    padding: 0 3px;
    list-style: none;
    color: #888;
    border-bottom: 1px solid #bbb;
}
.order-list li {
    display: flex;
    align-items: center;
    height: 17px;
    gap: 6px;
}
.layer-icon {
    width: 12px;
    height: 12px;
    background: #aaa;
    border: 2px solid #ccc;
    outline: 1px solid #bbb;
    outline-offset: -1px;
}
.check-row {
    display: flex;
    align-items: center;
    gap: 4px;
    height: 26px;
}
.check {
    appearance: none;
    flex: none;
    width: 12px;
    height: 12px;
    margin: 0;
    background: #fff;
    border: 1px solid #ccc;
}
.check:checked::after {
    content: "";
    display: block;
    width: 4px;
    height: 7px;
    margin: 0 3px;
    border: solid #000;
    border-width: 0 2px 2px 0;
    transform: rotate(35deg);
}
.splitter {
    width: 16px;
    margin: 0 auto;
    border-top: 1px dotted #aaa;
}
.layers {
    flex: 1;
    display: flex;
    flex-direction: column;
}
.layer-tools {
    display: flex;
    align-items: center;
    gap: 8px;
    height: 30px;
    padding-left: 6px;
}
.layer-tools button {
    display: flex;
    width: 16px;
}
.layer-tools svg {
    width: 16px;
    height: 16px;
}
.layer-tools .has-arrow::after {
    right: 0;
    bottom: 0;
}
.layer-tools .arrow {
    margin: 0 -3px;
}
.tree {
    flex: 1;
    background: #fff;
}
.tree-row {
    display: flex;
    align-items: center;
    height: 17px;
    padding-left: 22px;
    background: #0c7cd8;
    color: #fff;
    text-decoration: underline;
}
.swatch {
    width: 15px;
    height: 14px;
    margin: 0 6px;
    background: #33a02c;
    border: 1px solid #23731e;
}
.canvas {
    flex: 1;
    min-width: 0;
    background: #fff;
    border: 1px solid #c8c8c8;
    border-right: 0;
}
#map {
    display: block;
    width: 100%;
    height: 100%;
}
.land {
    fill: #33a02c;
    stroke: #232323;
    stroke-width: 1.6px;
    stroke-linejoin: round;
}
.borders {
    fill: none;
    stroke: #232323;
    stroke-width: 1px;
}
.islets {
    fill: none;
    stroke: #232323;
    stroke-width: 2px;
    stroke-linecap: round;
}
.thick {
    stroke-width: 3.5px;
}

/* status bar */
.statusbar {
    display: flex;
    align-items: center;
    height: 25px;
    padding: 0 4px;
    font-family: "Liberation Sans", "Noto Sans CJK JP", sans-serif;
    font-size: 10px;
}
.statusbar input[type="text"],
.statusbar select {
    height: 19px;
    font: inherit;
    color: #333;
    background: #fff;
    border: 1px solid #b5b5b5;
    border-radius: 2px;
    padding: 0 2px;
}
.statusbar label {
    margin-right: 4px;
}
.statusbar button {
    display: flex;
    align-items: center;
    justify-content: center;
}
.statusbar button svg {
    width: 15px;
    height: 15px;
}
.search {
    position: relative;
    width: 188px;
    margin-right: auto;
}
.search svg {
    position: absolute;
    left: 8px;
    top: 4px;
    width: 12px;
    height: 12px;
    fill: none;
    stroke: #777;
}
.statusbar .search input {
    width: 100%;
    padding-left: 25px;
    font-size: 11px;
}
.search ::placeholder {
    color: #888;
}
.statusbar .coord {
    width: 85px;
}
.extent {
    width: 30px;
}
.statusbar select {
    appearance: none;
    width: 76px;
    padding: 0 0 0 1px;
    background: linear-gradient(45deg, transparent 50%, #555 50%) no-repeat right 8px center / 4px 4px, linear-gradient(-45deg, transparent 50%, #555 50%) no-repeat right 4px center / 4px 4px, linear-gradient(#c4c4c4, #c4c4c4) no-repeat right 16px top / 1px 100%, #fff;
}
.lock {
    width: 31px;
}
.spin {
    display: grid;
    grid-template-columns: 1fr 14px;
    width: 78px;
    height: 19px;
    margin-right: 9px;
    background: #fff;
    border: 1px solid #b5b5b5;
    border-radius: 2px;
}
.statusbar .spin input {
    grid-row: 1 / 3;
    width: 100%;
    height: 17px;
    border: 0;
    border-right: 1px solid #c4c4c4;
}
.spin button::after {
    content: "";
    border: 4px solid transparent;
    border-bottom-color: #555;
    border-top: 0;
}
.spin .down::after {
    transform: rotate(180deg);
}
.render {
    display: flex;
    align-items: center;
    gap: 4px;
}
.crs {
    gap: 1px;
    margin: 0 20px 0 6px;
}
```

FILE: map.js
```js
// municipality borders: seeded Voronoi cells, packed tighter around the big cities
var seed = 7;
function rand() {
    seed = (seed * 16807) % 2147483647;
    return seed / 2147483647;
}

// x, y, radius, spacing
var dense = [
    [796, 385, 12, 1.2],
    [749, 391, 8, 1.5],
    [725, 398, 11, 1.5],
    [638, 418, 12, 2],
    [812, 362, 12, 2.7],
    [622, 428, 8, 1.9],
    [690, 400, 14, 2.8]
];

function spacing(x, y) {
    for (const [cx, cy, r, s] of dense) {
        if (Math.hypot(x - cx, y - cy) < r) return s;
    }
    if (y < 285) return 4.6;
    if (y < 345) return 4;
    return 3.4;
}

var points = [];
function scatter(x0, y0, x1, y1, tries) {
    for (let i = 0; i < tries; i++) {
        const x = x0 + rand() * (x1 - x0);
        const y = y0 + rand() * (y1 - y0);
        const s = spacing(x, y) * (.4 + rand());
        if (points.every(p => Math.hypot(p[0] - x, p[1] - y) > s)) points.push([x, y]);
    }
}
scatter(798, 205, 965, 285, 1800);
scatter(790, 280, 845, 345, 500);
scatter(725, 335, 830, 425, 2600);
scatter(780, 372, 810, 400, 600);
scatter(600, 380, 735, 470, 3200);

// keep the part of the polygon closer to p than to q
function clip(poly, p, q) {
    const mx = (p[0] + q[0]) / 2, my = (p[1] + q[1]) / 2;
    const nx = q[0] - p[0], ny = q[1] - p[1];
    const side = v => (v[0] - mx) * nx + (v[1] - my) * ny;
    const out = [];
    poly.forEach((a, i) => {
        const b = poly[(i + 1) % poly.length];
        const da = side(a), db = side(b);
        if (da <= 0) out.push(a);
        if (da * db < 0) {
            const t = da / (da - db);
            out.push([a[0] + (b[0] - a[0]) * t, a[1] + (b[1] - a[1]) * t]);
        }
    });
    return out;
}

var d = "";
points.forEach(p => {
    let cell = [[p[0] - 7, p[1] - 7], [p[0] + 7, p[1] - 7], [p[0] + 7, p[1] + 7], [p[0] - 7, p[1] + 7]];
    points.forEach(q => {
        if (q !== p && Math.hypot(p[0] - q[0], p[1] - q[1]) < 14) cell = clip(cell, p, q);
    });
    if (cell.length) d += "M" + cell.map(v => v[0].toFixed(1) + " " + v[1].toFixed(1)).join("L") + "z";
});

var path = document.createElementNS("http://www.w3.org/2000/svg", "path");
path.setAttribute("class", "borders");
path.setAttribute("d", d);
document.getElementById("cells").appendChild(path);
```
